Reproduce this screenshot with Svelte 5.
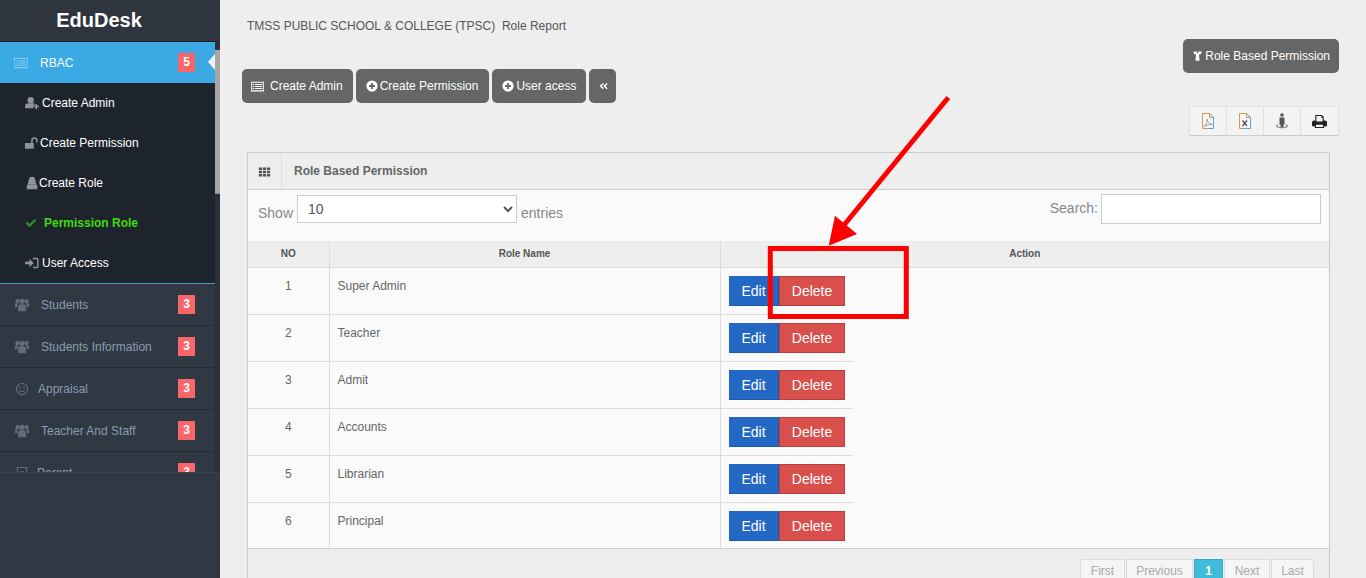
<script>
  const subItems = [
    { label: 'Create Admin', icon: 'userplus' },
    { label: 'Create Permission', icon: 'unlock' },
    { label: 'Create Role', icon: 'spy' },
    { label: 'Permission Role', icon: 'check', active: true },
    { label: 'User Access', icon: 'signin' }
  ];

  const menu = [
    { label: 'Students', icon: 'users' },
    { label: 'Students Information', icon: 'users' },
    { label: 'Appraisal', icon: 'smile' },
    { label: 'Teacher And Staff', icon: 'users' },
    { label: 'Parent', icon: 'box' }
  ];

  const roles = ['Super Admin', 'Teacher', 'Admit', 'Accounts', 'Librarian', 'Principal'];
  const pages = ['First', 'Previous', '1', 'Next', 'Last'];
</script>

{#snippet icon(name)}
  <svg class="ico" viewBox="0 0 16 16" aria-hidden="true">
    {#if name === 'list'}
      <path fill-rule="evenodd" d="M0 2h16v12H0zM1 3.500v9h14v-9zM2 5h2v1.200H2zM5 5h9v1.200H5zM2 7.400h2v1.200H2zM5 7.400h9v1.200H5zM2 9.800h2V11H2zM5 9.800h9V11H5z" />
    {:else if name === 'userplus'}
      <circle cx="6.500" cy="4.800" r="3.600" /><path d="M0 14v-2.500C0 9.500 1.500 8.200 3.500 8.200h6c.5 0 1 .1 1.400.3V11H9.500v3z" /><path d="M12 9h1.800v2H16v1.800h-2.200V15H12v-2.200H10V11h2z" />
    {:else if name === 'unlock'}
      <path d="M0 8h10v6.500H0z" /><path d="M7 8V5a3.700 3.700 0 0 1 7.400 0v2.500h-1.800V5a1.900 1.900 0 0 0-3.800 0v3z" />
    {:else if name === 'spy'}
      <path d="M5.500 1h5l1.500 4.500.8 3.500H3.200l.8-3.500z" /><path d="M2 15v-3.500C2 10 3 9.500 4 9.500h8c1 0 2 .5 2 2V15z" />
    {:else if name === 'check'}
      <path d="M1 8.500l2.200-2.200 3 3L13 2.500l2.200 2.200-9 9z" />
    {:else if name === 'signin'}
      <path d="M0 6.500h5V3.500l5 4.500-5 4.500v-3H0z" /><path d="M9 2h4.500A2 2 0 0 1 15.500 4v8a2 2 0 0 1-2 2H9v-1.800h4.200a.6.600 0 0 0 .6-.6V4.400a.6.600 0 0 0-.6-.6H9z" />
    {:else if name === 'users'}
      <circle cx="8" cy="3.800" r="3" /><circle cx="2.800" cy="3.600" r="2.400" /><circle cx="13.200" cy="3.600" r="2.400" /><path d="M3.500 15V9.800C3.500 8 4.600 7 6 7h4c1.400 0 2.500 1 2.500 2.800V15z" /><path d="M0 10.500V7.500c0-1 .7-1.600 1.700-1.600h2C3 6.800 2.600 8 2.600 10.500zM16 10.500V7.500c0-1-.7-1.600-1.700-1.600h-2c.7.900 1.100 2.100 1.100 4.600z" />
    {:else if name === 'smile'}
      <path fill-rule="evenodd" d="M8 1a7 7 0 1 1 0 14A7 7 0 0 1 8 1zm0 1.300a5.700 5.700 0 1 0 0 11.400A5.700 5.700 0 0 0 8 2.300z" /><circle cx="5.600" cy="6.300" r="1" /><circle cx="10.400" cy="6.300" r="1" /><path d="M4.600 9.400l1-.3c.4 1 1.300 1.500 2.400 1.500s2-.5 2.400-1.500l1 .3C10.900 10.800 9.600 11.700 8 11.700s-2.900-.9-3.400-2.300z" />
    {:else if name === 'box'}
      <path fill-rule="evenodd" d="M2 1h12v14H2zM3.300 2.300v11.400h9.400V2.300zM6 6h4v4H6z" />
    {:else if name === 'plus'}
      <path fill-rule="evenodd" d="M8 .500a7.500 7.500 0 1 1 0 15A7.500 7.500 0 0 1 8 .500zM6.800 4v2.800H4v2.400h2.800V12h2.400V9.200H12V6.800H9.200V4z" />
    {:else if name === 'angles'}
      <path d="M7.800 3L2.500 8l5.300 5 1.600-1.600L5.800 8l3.600-3.400zM13.800 3L8.500 8l5.300 5 1.600-1.600L11.800 8l3.600-3.400z" />
    {:else if name === 'tie'}
      <path d="M2 1.500h12l-.8 3.500-3 .8L11 15H5l.8-9.200-3-.8z" /><path d="M6.500 1.500h3L8.800 4H7.200z" fill="#666" />
    {:else if name === 'grid'}
      <path d="M1 3h4v3H1zM6 3h4v3H6zM11 3h4v3h-4zM1 7h4v3H1zM6 7h4v3H6zM11 7h4v3h-4zM1 11h4v3H1zM6 11h4v3H6zM11 11h4v3h-4z" />
    {/if}
  </svg>
{/snippet}

<div class="page">
  <aside class="sidebar">
    <div class="logo">EduDesk</div>
    <div class="menu-wrap">
      <nav class="menu">
        <div class="item open">
          <span class="item-ico">{@render icon('list')}</span>
          <span class="item-label rbac">RBAC</span>
          <span class="badge">5</span>
          <span class="caret"></span>
        </div>
        <ul class="sub">
          {#each subItems as s}
            <li class:active={s.active}>
              <span class="sub-ico {s.icon}">{@render icon(s.icon)}</span>{s.label}
            </li>
          {/each}
        </ul>
        {#each menu as m}
          <div class="item">
            <span class="item-ico">{@render icon(m.icon)}</span>
            <span class="item-label {m.icon}">{m.label}</span>
            <span class="badge">3</span>
          </div>
        {/each}
      </nav>
      <div class="track"><div class="thumb"></div></div>
    </div>
  </aside>

  <main class="content">
    <div class="title">TMSS PUBLIC SCHOOL &amp; COLLEGE (TPSC)&nbsp; Role Report</div>

    <div class="top-right">
      <button class="btn role">{@render icon('tie')}Role Based Permission</button>
    </div>

    <div class="toolbar">
      <button class="btn first">{@render icon('list')}Create Admin</button>
      <button class="btn wide">{@render icon('plus')}Create Permission</button>
      <button class="btn">{@render icon('plus')}User acess</button>
      <button class="btn back">{@render icon('angles')}</button>
    </div>

    <div class="exports">
      <span class="exp">
        <svg viewBox="0 0 14 16" width="14" height="16">
          <path d="M1.500.500h7v4h4v11h-11z" fill="#f7f7f7" stroke="#d09a58" />
          <path d="M8.500.500l4 4v11h-6" fill="none" stroke="#6a9bd0" />
          <path d="M2.500 14c2.500-1.500 3.800-4.500 3.500-8 .5 3 2.500 5 5.500 5.500-3-.2-6.500.5-9 2.500z" fill="none" stroke="#888" stroke-width=".8" />
        </svg>
      </span>
      <span class="exp">
        <svg viewBox="0 0 14 16" width="14" height="16">
          <path d="M1.500.500h7v4h4v11h-11z" fill="#f7f7f7" stroke="#d09a58" />
          <path d="M8.500.500l4 4v11h-8" fill="none" stroke="#6a9bd0" />
          <path d="M4.500 7.500l4.500 5.500M9 7.500l-4.500 5.500" stroke="#555" stroke-width="1.300" fill="none" />
        </svg>
      </span>
      <span class="exp">
        <svg viewBox="0 0 14 16" width="14" height="16" fill="#555">
          <circle cx="7" cy="2" r="1.800" />
          <path d="M4.500 4.500h5v7h-1v2.500h-3v-2.500h-1z" />
          <path d="M1 13c0-1 1-1.500 2.500-1.800v1c-.8.100-1.200.4-1.200.8 0 .7 2 1 4.700 1s4.700-.3 4.700-1c0-.4-.4-.7-1.200-.8v-1C12 11.500 13 12 13 13c0 1.500-2.700 2.200-6 2.200S1 14.500 1 13z" fill="#8a8a8a" />
        </svg>
      </span>
      <span class="exp">
        <svg viewBox="0 0 16 16" width="15" height="15" fill="#222">
          <path fill-rule="evenodd" d="M3.500 1h7l2 2v4h1.500A2 2 0 0 1 16 9v4h-3v2H3v-2H0V9a2 2 0 0 1 2-2h1.500zM4.700 2.200V8h6.600V4H10V2.200zM4.300 11.500v2.300h7.400v-2.300z" />
        </svg>
      </span>
    </div>

    <section class="panel">
      <header class="panel-head">
        <span class="head-ico">{@render icon('grid')}</span>
        <h2>Role Based Permission</h2>
      </header>
      <div class="panel-body">
        <div class="filters">
          <label class="show">
            Show
            <select><option>10</option><option>25</option><option>50</option></select>
            entries
          </label>
          <label class="search">Search:<input type="text" /></label>
        </div>
        <table>
          <thead>
            <tr>
              <th class="c1">NO</th>
              <th class="c2">Role Name</th>
              <th class="c3">Action</th>
            </tr>
          </thead>
          <tbody>
            {#each roles as role, i}
              <tr>
                <td class="no">{i + 1}</td>
                <td class="name">{role}</td>
                <td class="action">
                  <div class="actions">
                    <button class="edit">Edit</button><button class="delete">Delete</button>
                  </div>
                </td>
              </tr>
            {/each}
          </tbody>
        </table>
      </div>
      <footer class="panel-foot">
        <div class="pager">
          {#each pages as p}
            <span class="page-btn" class:current={p === '1'}>{p}</span>
          {/each}
        </div>
      </footer>
    </section>
  </main>

  <!-- red annotation drawn on top of the screenshot -->
  <svg class="annotation" width="1366" height="578" viewBox="0 0 1366 578">
    <rect x="770.300" y="248.500" width="136" height="68" fill="none" stroke="#f00" stroke-width="5" />
    <path d="M948.300 97.500L840 230" stroke="#f00" stroke-width="5" fill="none" />
    <path d="M828.700 245.700l6.300-30 22 18.300z" fill="#f00" />
  </svg>
</div>

<style>
  :global(body) {
    margin: 0;
    background: #eee;
    font-family: "Liberation Sans", Arial, sans-serif;
  }

  .page {
    position: relative;
    display: flex;
    width: 1366px;
    height: 578px;
    overflow: hidden;
    background: #eee;
  }

  .ico {
    width: 14px;
    height: 14px;
    fill: currentColor;
    flex: none;
  }

  /* sidebar */
  .sidebar {
    width: 220px;
    flex: none;
    background: #303843;
  }

  .logo {
    height: 42px;
    line-height: 41px;
    text-align: center;
    color: #fff;
    font-size: 20px;
    font-weight: 700;
    box-sizing: border-box;
    padding-right: 22px;
    background: #2e353f;
    border-bottom: 1px solid #1d232b;
  }

  .menu-wrap {
    display: flex;
    height: 430px;
    overflow: hidden;
    border-bottom: 1px solid #3a444f;
  }

  .menu {
    width: 215px;
    flex: none;
  }

  .track {
    width: 5px;
    background: #2a3039;
  }

  .thumb {
    margin-top: 8px;
    height: 143px;
    background: #a6a6a6;
    border-bottom: 1px solid #7f93a8;
  }

  .item {
    position: relative;
    display: flex;
    align-items: center;
    height: 42px;
    box-sizing: border-box;
    padding-top: 1px;
    color: #8a9bb2;
    font-size: 12px;
    border-bottom: 1px solid #262c34;
    background: #303843;
  }

  .item.open {
    height: 41px;
    padding-top: 0;
    background: #3aa9e4;
    color: #fff;
    border-bottom: 0;
  }

  .item-ico {
    display: flex;
    width: 14px;
    margin-left: 15px;
    color: #636c78;
  }

  .item.open .item-ico {
    color: #7bcdf3;
    margin-left: 14px;
    width: 15px;
  }

  .item-label {
    margin-left: 12px;
  }

  .item-label.rbac {
    margin-left: 11px;
  }

  .item-label.smile {
    margin-left: 9px;
  }

  .item-label.box {
    margin-left: 8px;
  }

  .badge {
    position: absolute;
    left: 178px;
    top: 11px;
    width: 17px;
    height: 19px;
    background: #f8666a;
    color: #fff;
    font-size: 12px;
    font-weight: 700;
    line-height: 19px;
    text-align: center;
  }

  .caret {
    position: absolute;
    right: 0;
    top: 12px;
    border-style: solid;
    border-width: 8px 7px 8px 0;
    border-color: transparent #f2f2f2 transparent transparent;
  }

  .sub {
    list-style: none;
    margin: 0;
    padding: 0;
    background: #1e242c;
    border-bottom: 1px solid #4a9cc9;
  }

  .sub li {
    display: flex;
    align-items: center;
    height: 40px;
    padding-left: 25px;
    color: #fff;
    font-size: 12px;
  }

  .sub li.active {
    color: #40dc0c;
    font-weight: 700;
  }

  .sub-ico {
    display: flex;
    color: #8f949b;
    margin-right: 3px;
  }

  .sub-ico.unlock {
    margin-right: 1px;
  }

  .sub-ico.spy {
    margin-right: 0;
  }

  .sub-ico.signin {
    margin-right: 3px;
  }

  .sub-ico.check {
    color: #2f8f2a;
    margin-right: 7px;
  }

  .sub-ico.check .ico {
    width: 12px;
  }

  /* main column */
  .content {
    flex: 1;
    min-width: 0;
    color: #555;
  }

  .title {
    margin: 19px 0 0 27px;
    height: 14px;
    line-height: 14px;
    font-size: 12px;
  }

  .top-right {
    display: flex;
    justify-content: flex-end;
    margin: 6px 27px 0 0;
  }

  .btn {
    display: inline-flex;
    align-items: center;
    gap: 2px;
    height: 34px;
    padding: 0 10px;
    border: 0;
    border-radius: 5px;
    background: #666;
    color: #fff;
    font: 12px "Liberation Sans", Arial, sans-serif;
  }

  .btn .ico {
    width: 12px;
    height: 12px;
  }

  .btn.role {
    padding: 0 9px;
  }

  .btn.role .ico {
    width: 11px;
  }

  .btn.first {
    gap: 6px;
    padding-left: 9px;
  }

  .btn.first .ico {
    width: 13px;
    height: 13px;
  }

  .btn.wide {
    padding-right: 11px;
  }

  .btn.back {
    width: 27px;
    justify-content: center;
    padding: 0;
  }

  .btn.back .ico {
    width: 10px;
    height: 10px;
  }

  .toolbar {
    display: flex;
    gap: 3px;
    margin: -4px 0 0 22px;
  }

  .exports {
    display: flex;
    justify-content: flex-end;
    margin: 3px 27px 0 0;
  }

  .exp {
    display: flex;
    align-items: center;
    justify-content: center;
    width: 38px;
    height: 30px;
    box-sizing: border-box;
    background: #f3f3f3;
    border: 1px solid #e2e2e2;
    border-bottom: 1px solid #ccc;
    margin-left: -1px;
  }

  .exp:last-child {
    width: 39px;
  }

  .panel {
    margin: 16px 36px 0 27px;
    border: 1px solid #ccc;
    background: #fafafa;
  }

  .panel-head {
    display: flex;
    align-items: stretch;
    height: 36px;
    background: #eee;
    border-bottom: 1px solid #ccc;
  }

  .head-ico {
    display: flex;
    align-items: center;
    justify-content: center;
    width: 33px;
    color: #555;
    border-right: 1px solid #ddd;
  }

  .head-ico .ico {
    width: 13px;
    height: 13px;
  }

  .panel-head h2 {
    margin: 0 0 0 12px;
    align-self: center;
    font-size: 12px;
    font-weight: 700;
    color: #666;
  }

  .filters {
    display: flex;
    justify-content: space-between;
    height: 51px;
    padding: 4px 8px 0 10px;
    box-sizing: border-box;
    color: #888;
    font-size: 14px;
  }

  .show {
    display: flex;
    align-items: flex-start;
    gap: 4px;
    line-height: 39px;
    height: 28px;
  }

  .show select {
    width: 220px;
    height: 28px;
    margin-top: 1px;
    padding: 0 0 0 6px;
    border: 1px solid #ccc;
    border-radius: 0;
    background: #fff;
    color: #555;
    font: 14px "Liberation Sans", Arial, sans-serif;
  }

  .search {
    display: flex;
    align-items: flex-start;
    gap: 3px;
    line-height: 28px;
  }

  .search input {
    width: 220px;
    height: 30px;
    box-sizing: border-box;
    border: 1px solid #ccc;
    background: #fff;
    padding: 0 4px;
  }

  table {
    width: 100%;
    table-layout: fixed;
    border-collapse: collapse;
    color: #666;
    font-size: 12px;
  }

  th {
    height: 26px;
    padding: 0;
    background: #eee;
    color: #555;
    font-size: 10px;
    font-weight: 700;
    text-align: center;
    border-right: 1px solid #ddd;
    border-bottom: 1px solid #ddd;
    box-sizing: border-box;
  }

  th.c3 {
    border-right: 0;
  }

  .c1 {
    width: 81px;
  }

  .c2 {
    width: 391px;
  }

  td {
    height: 47px;
    padding: 0;
    box-sizing: border-box;
    vertical-align: top;
    border-right: 1px solid #ddd;
    border-bottom: 1px solid #ddd;
  }

  td.no {
    padding-top: 11px;
    text-align: center;
  }

  td.name {
    padding: 11px 0 0 8px;
  }

  td.action {
    border-right: 0;
    border-bottom: 0;
  }

  tr:last-child td {
    height: 45px;
    border-bottom: 0;
  }

  .actions {
    box-sizing: border-box;
    width: 132px;
    height: 47px;
    padding: 8px 0 0 8px;
    border-bottom: 1px solid #ddd;
  }

  tr:last-child .actions {
    height: 45px;
    border-bottom: 0;
  }

  .actions button {
    box-sizing: border-box;
    height: 30px;
    padding: 0;
    color: #fff;
    font: 14px "Liberation Sans", Arial, sans-serif;
    vertical-align: top;
  }

  .edit {
    width: 50px;
    background: #2468c5;
    border: 1px solid #2468c5;
    border-bottom-color: #1d5aa8;
    border-right-color: #1d5aa8;
  }

  .actions .delete {
    width: 66px;
    padding-left: 1px;
    background: #d94f4b;
    border: 1px solid #b73f3c;
  }

  .panel-foot {
    display: flex;
    justify-content: flex-end;
    height: 60px;
    padding: 10px 15px 0 0;
    box-sizing: border-box;
    background: #eee;
    border-top: 1px solid #ccc;
  }

  .pager {
    display: flex;
    gap: 1px;
    height: 30px;
  }

  .page-btn {
    box-sizing: border-box;
    width: 46px;
    height: 30px;
    padding-top: 4px;
    text-align: center;
    border: 1px solid #ddd;
    background: #f5f5f5;
    color: #aaa;
    font-size: 12px;
  }

  .page-btn:first-child {
    width: 45px;
    border-top-left-radius: 3px;
  }

  .page-btn:nth-child(2) {
    width: 67px;
  }

  .page-btn:last-child {
    width: 43px;
    border-top-right-radius: 3px;
  }

  .page-btn.current {
    width: 29px;
    background: #3fbcdc;
    border-color: #3aa6c6;
    color: #fff;
    font-weight: 700;
  }

  .annotation {
    position: absolute;
    left: 0;
    top: 0;
    pointer-events: none;
  }
</style>
